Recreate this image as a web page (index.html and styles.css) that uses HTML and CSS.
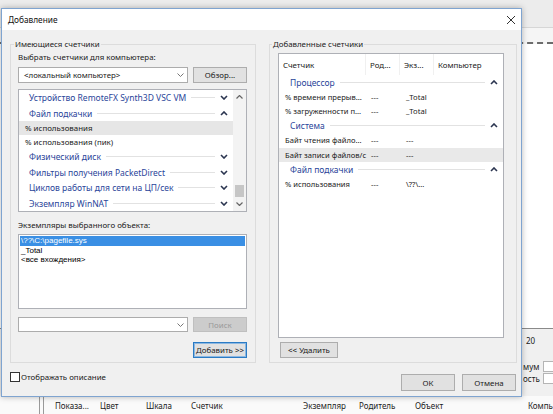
FILE: index.html
```html
<!DOCTYPE html>
<html lang="ru">
<head>
<meta charset="utf-8">
<title>Добавление</title>
<link rel="stylesheet" href="styles.css">
</head>
<body>
<div class="screen">
  <div class="bgwin">
    <div class="bg-top"></div>
    <div class="bg-tool"></div>
    <div class="bg-graph"></div>
    <div class="bg-props">
      <div class="bp-row bp-r1"><span>20</span></div>
      <div class="bp-row bp-r2"><span class="bp-lbl">мум</span><i class="bp-box"></i></div>
      <div class="bp-row bp-r3"><span class="bp-lbl">ость</span><i class="bp-box"></i></div>
    </div>
    <div class="bg-header">
      <span class="bh-sep"></span>
      <span class="bh w1">Показа...</span>
      <span class="bh w2">Цвет</span>
      <span class="bh w3">Шкала</span>
      <span class="bh w4">Счетчик</span>
      <span class="bh w5">Экземпляр</span>
      <span class="bh w6">Родитель</span>
      <span class="bh w7">Объект</span>
      <span class="bh w8">Компь</span>
    </div>
  </div>

  <div class="dialog">
    <div class="titlebar">
      <span class="title">Добавление</span>
      <svg class="close" width="10" height="10" viewBox="0 0 10 10"><path d="M1 1 L9 9 M9 1 L1 9" stroke="#333" stroke-width="1" fill="none"/></svg>
    </div>
    <div class="dbody">
      <div class="groups">
        <fieldset class="group gleft">
          <legend>Имеющиеся счетчики</legend>
          <div class="lbl">Выбрать счетчики для компьютера:</div>
          <div class="row r-comp">
            <div class="combo"><span class="combo-text">&lt;локальный компьютер&gt;</span><svg class="cchev" width="7" height="4" viewBox="0 0 7 4"><path d="M0.5 0.5 L3.5 3.5 L6.5 0.5" stroke="#777" stroke-width="1" fill="none"/></svg></div>
            <div class="btn">Обзор...</div>
          </div>
          <div class="list counters">
            <div class="lv">
              <div class="grp"><span class="gt">Устройство RemoteFX Synth3D VSC VM</span><i class="gline"></i><svg class="chev" width="8" height="5" viewBox="0 0 8 5"><path d="M1 1 L4 4 L7 1" stroke="#2b3550" stroke-width="1.6" fill="none"/></svg></div>
              <div class="grp"><span class="gt">Файл подкачки</span><i class="gline"></i><svg class="chev" width="8" height="5" viewBox="0 0 8 5"><path d="M1 4 L4 1 L7 4" stroke="#2b3550" stroke-width="1.6" fill="none"/></svg></div>
              <div class="itm sel">% использования</div>
              <div class="itm">% использования (пик)</div>
              <div class="grp"><span class="gt">Физический диск</span><i class="gline"></i><svg class="chev" width="8" height="5" viewBox="0 0 8 5"><path d="M1 1 L4 4 L7 1" stroke="#2b3550" stroke-width="1.6" fill="none"/></svg></div>
              <div class="grp"><span class="gt">Фильтры получения PacketDirect</span><i class="gline"></i><svg class="chev" width="8" height="5" viewBox="0 0 8 5"><path d="M1 1 L4 4 L7 1" stroke="#2b3550" stroke-width="1.6" fill="none"/></svg></div>
              <div class="grp"><span class="gt">Циклов работы для сети на ЦП/сек</span><i class="gline"></i><svg class="chev" width="8" height="5" viewBox="0 0 8 5"><path d="M1 1 L4 4 L7 1" stroke="#2b3550" stroke-width="1.6" fill="none"/></svg></div>
              <div class="grp"><span class="gt">Экземпляр WinNAT</span><i class="gline"></i><svg class="chev" width="8" height="5" viewBox="0 0 8 5"><path d="M1 1 L4 4 L7 1" stroke="#2b3550" stroke-width="1.6" fill="none"/></svg></div>
            </div>
            <div class="vscroll">
              <div class="sarrow"><svg width="7" height="4" viewBox="0 0 7 4"><path d="M0.5 3.5 L3.5 0.5 L6.5 3.5" stroke="#666" stroke-width="1.2" fill="none"/></svg></div>
              <div class="track"><div class="thumb"></div></div>
              <div class="sarrow"><svg width="7" height="4" viewBox="0 0 7 4"><path d="M0.5 0.5 L3.5 3.5 L6.5 0.5" stroke="#666" stroke-width="1.2" fill="none"/></svg></div>
            </div>
          </div>
          <div class="lbl lbl2">Экземпляры выбранного объекта:</div>
          <div class="list inst">
            <div class="ii sel">\??\C:\pagefile.sys</div>
            <div class="ii">_Total</div>
            <div class="ii">&lt;все вхождения&gt;</div>
          </div>
          <div class="row r-search">
            <div class="combo"><span class="combo-text"></span><svg class="cchev" width="7" height="4" viewBox="0 0 7 4"><path d="M0.5 0.5 L3.5 3.5 L6.5 0.5" stroke="#777" stroke-width="1" fill="none"/></svg></div>
            <div class="btn dis">Поиск</div>
          </div>
          <div class="row r-add"><div class="btn def">Добавить &gt;&gt;</div></div>
        </fieldset>

        <fieldset class="group gright">
          <legend>Добавленные счетчики</legend>
          <div class="list added">
            <div class="hdr"><span>Счетчик</span><span>Род...</span><span>Экз...</span><span>Компьютер</span></div>
            <div class="agrp"><span class="gt">Процессор</span><i class="gline"></i><svg class="chev" width="8" height="5" viewBox="0 0 8 5"><path d="M1 4 L4 1 L7 4" stroke="#2b3550" stroke-width="1.6" fill="none"/></svg></div>
            <div class="arow"><span>% времени прерыв...</span><span>---</span><span>_Total</span></div>
            <div class="arow"><span>% загруженности п...</span><span>---</span><span>_Total</span></div>
            <div class="agrp"><span class="gt">Система</span><i class="gline"></i><svg class="chev" width="8" height="5" viewBox="0 0 8 5"><path d="M1 4 L4 1 L7 4" stroke="#2b3550" stroke-width="1.6" fill="none"/></svg></div>
            <div class="arow"><span>Байт чтения файло...</span><span>---</span><span>---</span></div>
            <div class="arow hl"><span>Байт записи файлов/с</span><span>---</span><span>---</span></div>
            <div class="agrp"><span class="gt">Файл подкачки</span><i class="gline"></i><svg class="chev" width="8" height="5" viewBox="0 0 8 5"><path d="M1 4 L4 1 L7 4" stroke="#2b3550" stroke-width="1.6" fill="none"/></svg></div>
            <div class="arow"><span>% использования</span><span>---</span><span>\??\...</span></div>
          </div>
          <div class="btn del">&lt;&lt; Удалить</div>
        </fieldset>
      </div>

      <div class="footer">
        <div class="chk"><i class="box"></i><span>Отображать описание</span></div>
        <div class="btn ok">ОК</div>
        <div class="btn cancel">Отмена</div>
      </div>
    </div>
  </div>
</div>
</body>
</html>
```

FILE: styles.css
```css
* { box-sizing: border-box; }
html, body { margin: 0; padding: 0; }
body {
  width: 553px;
  height: 414px;
  overflow: hidden;
  font-family: "Noto Sans", "Open Sans", sans-serif;
  font-size: 7.9px;
  color: #1a1a1a;
  background: #e8e8e8;
}
.screen { position: relative; width: 553px; height: 414px; overflow: hidden; }

/* background window */
.bgwin { display: flex; flex-direction: column; width: 553px; height: 414px; }
.bg-top { height: 28px; background: #ececec; border-bottom: 1px solid #d6d6d6; }
.bg-tool { height: 16px; background: #f5f5f5; border-bottom: 2px dashed #6c6c6c; }
.bg-graph { flex: 1; background: #fff; border-bottom: 1px solid #8a8a8a; }
.bg-props { height: 67px; background: #f0f0f0; padding: 5px 0 0 523px; display: flex; flex-direction: column; font-size: 8px; }
.bp-row { height: 12px; display: flex; align-items: center; white-space: nowrap; }
.bp-r1 { padding-left: 3px; margin-bottom: 14px; }
.bp-lbl { width: 20px; flex: none; }
.bp-box { display: block; flex: none; width: 14px; height: 11px; background: #fff; border: 1px solid #b5b5b5; }
.bg-header { height: 18px; background: #fafafa; display: flex; align-items: center; white-space: nowrap; font-size: 8px; color: #222; }
.bh-sep { flex: none; width: 5px; height: 18px; margin-left: 39px; margin-right: 11px; border-left: 1px solid #9a9a9a; border-right: 1px solid #9a9a9a; }
.bh { display: block; flex: none; }
.w1 { width: 45px; } .w2 { width: 46px; } .w3 { width: 45px; } .w4 { width: 112px; }
.w5 { width: 56px; } .w6 { width: 56px; } .w7 { width: 113px; }

/* dialog */
.dialog {
  position: absolute;
  left: 1px; top: 8px;
  width: 521px; height: 389px;
  border: 1px solid #7fa4d0;
  background: #f0f0f0;
  box-shadow: 0 0 6px rgba(0, 0, 0, 0.28);
  display: flex; flex-direction: column;
}
.titlebar { height: 21px; background: #fff; display: flex; align-items: center; padding-left: 6px; }
.title { font-size: 8.3px; color: #111; }
.close { margin-left: auto; margin-right: 5px; }
.dbody { flex: 1; padding: 8px 4px 0 8px; }
.groups { display: grid; grid-template-columns: 246px 248px; column-gap: 13px; }

.group { margin: 0; border: 1px solid #dcdcdc; min-width: 0; }
.group legend { line-height: 12px; padding: 0 1px; color: #222; }
.gleft { padding: 1px 8px 4px 7px; }
.gleft legend { margin-left: -4px; }
.gright { padding: 1px 12px 4px 8px; }
.gright legend { margin-left: -6px; }

.lbl { line-height: 12px; height: 12px; white-space: nowrap; }
.lbl2 { margin-top: 7px; }
.row { display: flex; column-gap: 5px; }
.r-comp { margin-top: 4px; height: 16px; }
.r-search { margin-top: 8px; height: 15px; }
.r-add { margin-top: 10px; height: 16px; justify-content: flex-end; }

.combo { width: 170px; height: 100%; background: #fff; border: 1px solid #acacac; display: flex; align-items: center; padding-left: 5px; }
.combo-text { flex: 1; white-space: nowrap; }
.cchev { margin-right: 3px; }

.btn { height: 16px; width: 54px; background: #e1e1e1; border: 1px solid #adadad; display: flex; align-items: center; justify-content: center; white-space: nowrap; }
.r-search .btn { height: 15px; }
.btn.dis { background: #cccccc; border-color: #bfbfbf; color: #9a9a9a; }
.btn.def { border-color: #2b7bc4; box-shadow: inset 0 0 0 1px #8cb8e2; }

.list { background: #fff; border: 1px solid #aeb0b6; }

.counters { margin-top: 6px; width: 229px; height: 123px; display: flex; }
.lv { flex: 1; overflow: hidden; }
.grp { height: 15.5px; display: flex; align-items: center; padding-left: 10px; padding-right: 5px; }
.gt { color: #2a459a; font-size: 8.5px; white-space: nowrap; }
.gline { flex: 1; height: 1px; background: #e2e2e2; margin: 0 5px 0 5px; }
.chev { display: block; flex: none; }
.itm { height: 14px; display: flex; align-items: center; padding-left: 6px; white-space: nowrap; }
.itm.sel { background: #e6e6e6; }
.vscroll { width: 13px; background: #f3f3f3; display: flex; flex-direction: column; }
.sarrow { height: 14px; display: flex; align-items: center; justify-content: center; }
.track { flex: 1; padding-top: 81px; }
.thumb { height: 12px; margin: 0 2px; background: #c6c6c6; }

.inst { margin-top: 3px; width: 229px; height: 75px; padding-top: 1px; font-family: "Liberation Sans", Arial, sans-serif; font-size: 8px; color: #000; }
.ii { height: 9.5px; line-height: 9.5px; padding-left: 2px; white-space: nowrap; }
.ii.sel { background: #3a8fe4; color: #fff; margin: 0 1px; padding-left: 1px; }

/* right */
.added { margin-top: 2px; width: 226px; height: 285px; }
.hdr { height: 21px; display: grid; grid-template-columns: 87px 34px 34px 1fr; }
.hdr span { display: flex; align-items: center; padding-left: 4px; border-right: 1px solid #f0f0f0; white-space: nowrap; }
.hdr span:last-child { border-right: 0; }
.agrp { height: 14.5px; display: flex; align-items: center; padding-left: 11px; padding-right: 5px; }
.arow { height: 14.5px; display: grid; grid-template-columns: 88px 34px 1fr; align-items: center; white-space: nowrap; font-size: 7.6px; }
.arow span:nth-child(1) { padding-left: 6px; }
.arow span:nth-child(2) { padding-left: 4px; }
.arow span:nth-child(3) { padding-left: 5px; }
.arow.hl { background: #e9e9e9; }
.btn.del { margin-top: 4px; margin-left: 2px; width: 58px; }

.footer { margin-top: 9px; display: flex; align-items: flex-start; }
.chk { display: flex; align-items: center; height: 10px; white-space: nowrap; }
.box { display: block; width: 10px; height: 10px; border: 1px solid #333; background: #fff; margin-right: 1px; }
.btn.ok { margin-left: auto; margin-top: 2px; height: 17px; }
.btn.cancel { margin-left: 7px; margin-top: 2px; margin-right: 1px; height: 17px; }
```
